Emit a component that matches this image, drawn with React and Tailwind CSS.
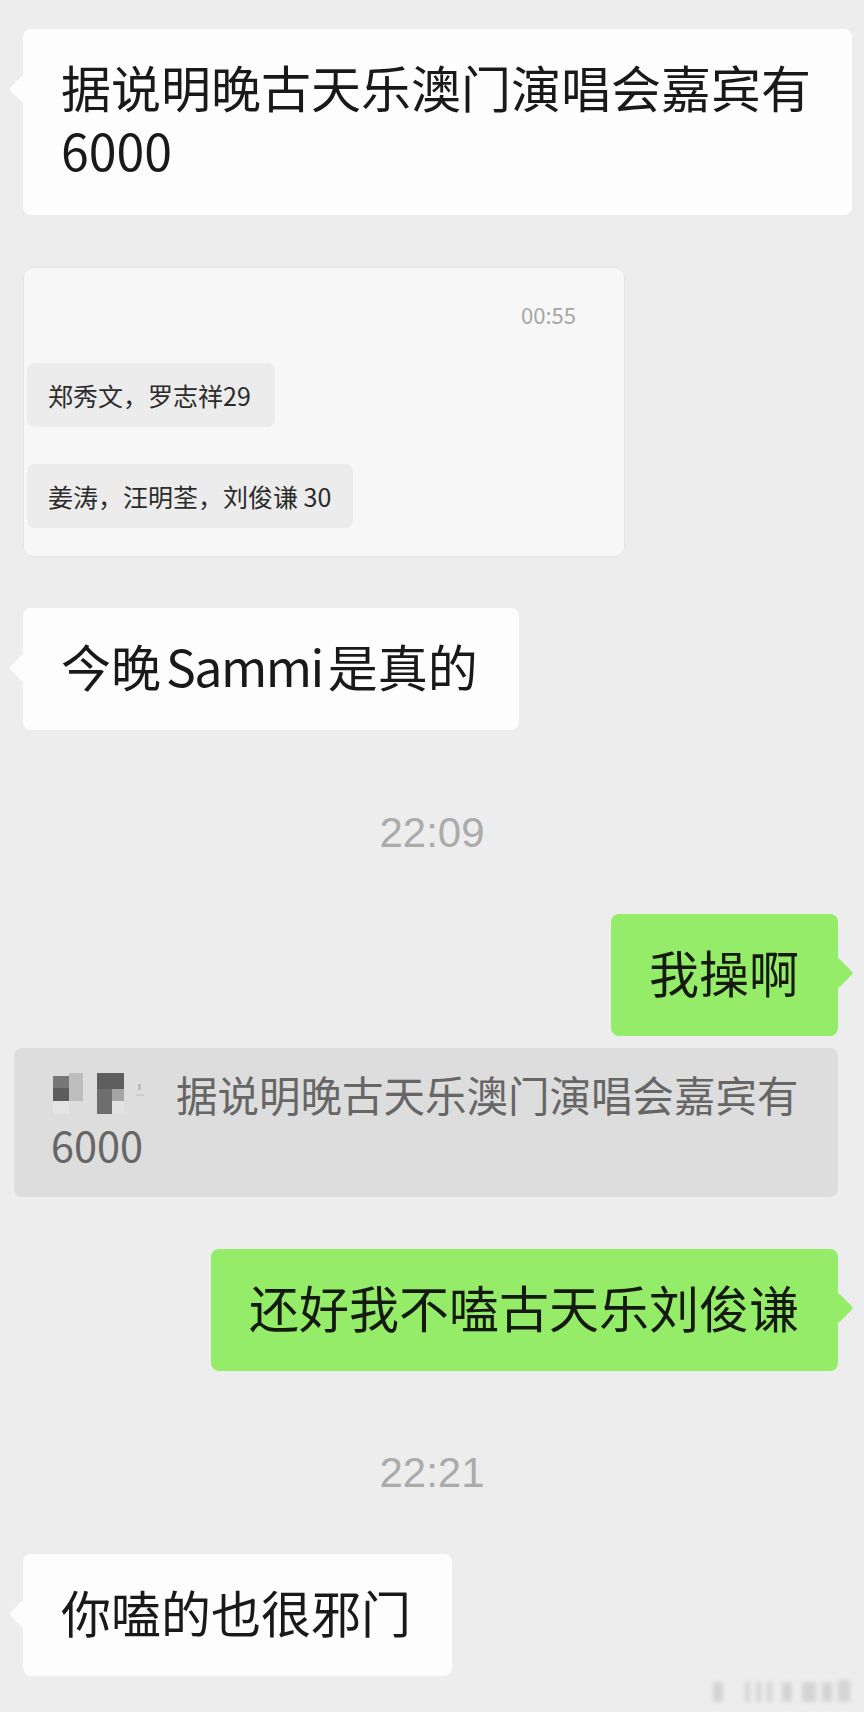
import React from "react";

function LeftBubble({ children, className = "" }) {
  return (
    <div className={`relative self-start ml-[23px] bg-[#fdfdfd] rounded-[8px] pl-[38px] pr-[41px] pt-[26px] pb-[34px] text-[50px] leading-[62px] text-[#191919] whitespace-nowrap ${className}`}>
      <div className="absolute left-[-10px] top-[50px] w-5 h-5 rotate-45 rounded-[3px] bg-[#fdfdfd]" />
      <span className="relative">{children}</span>
    </div>
  );
}

function RightBubble({ children, className = "" }) {
  return (
    <div className={`relative self-end mr-[26px] bg-[#95ec69] rounded-[8px] pl-[38px] pr-[39px] pt-[26px] pb-[34px] text-[50px] leading-[62px] text-[#141a10] whitespace-nowrap ${className}`}>
      <div className="absolute right-[-11px] top-[48px] w-[22px] h-[22px] rotate-45 rounded-[3px] bg-[#95ec69]" />
      <span className="relative">{children}</span>
    </div>
  );
}

function Time({ children, className = "" }) {
  return (
    <div className={`self-center h-[48px] leading-[48px] text-[42px] text-[#ababab] font-['Liberation_Sans',sans-serif] ${className}`}>
      {children}
    </div>
  );
}

// blurred avatar/name in the quote
function Mosaic() {
  return (
    <svg width="102" height="44" viewBox="0 0 102 44" className="ml-[1px] mr-[22px] shrink-0">
      <rect x="1" y="4" width="16" height="12" fill="#777" />
      <rect x="1" y="16" width="16" height="13" fill="#5c5c5c" />
      <rect x="17" y="1" width="14" height="28" fill="#bdbdbd" />
      <rect x="1" y="29" width="16" height="13" fill="#e4e4e4" />
      <rect x="45" y="1" width="27" height="16" fill="#5e5e5e" />
      <rect x="45" y="17" width="15" height="25" fill="#6e6e6e" />
      <rect x="60" y="17" width="12" height="12" fill="#a5a5a5" />
      <rect x="60" y="29" width="12" height="13" fill="#e2e2e2" />
      <rect x="86" y="12" width="3" height="6" fill="#bbb" />
      <rect x="84" y="22" width="8" height="2" fill="#ccc" />
    </svg>
  );
}

function Watermark() {
  return (
    <svg width="146" height="28" viewBox="0 0 146 28" className="absolute left-[710px] top-[1677px]">
      <defs>
        <filter id="wm" x="-10%" y="-30%" width="120%" height="160%">
          <feGaussianBlur stdDeviation="2" />
        </filter>
      </defs>
      <g filter="url(#wm)" fill="#d4d4d4">
        <rect x="3" y="5" width="10" height="20" />
        <rect x="35" y="5" width="5" height="20" />
        <rect x="46" y="5" width="5" height="20" />
        <rect x="57" y="5" width="5" height="20" />
        <rect x="72" y="5" width="10" height="20" />
        <rect x="92" y="5" width="14" height="20" />
        <rect x="112" y="5" width="10" height="20" />
        <rect x="128" y="3" width="12" height="22" />
      </g>
    </svg>
  );
}

export default function App() {
  return (
    <div className="relative w-[864px] min-h-[1712px] bg-[#ededed] flex flex-col pt-[29px] font-['Noto_Sans_CJK_SC','Noto_Sans',sans-serif]">
      <LeftBubble className="!leading-[63px]">
        据说明晚古天乐澳门演唱会嘉宾有
        <br />
        6000
      </LeftBubble>

      {/* forwarded chat record */}
      <div className="self-start ml-[23px] mt-[52px] w-[602px] bg-[#f7f7f7] border border-[#e3e3e3] rounded-[10px] pt-[35px] pb-[28px] pl-[3px] pr-[48px] flex flex-col items-start">
        <div className="self-end text-[22px] leading-[22px] text-[#a6a6a6]">00:55</div>
        <div className="mt-[38px] bg-[#ececec] rounded-[8px] pl-[21px] pr-[24px] py-[19px] text-[25px] leading-[26px] text-[#2b2b2b] whitespace-nowrap">
          郑秀文，罗志祥29
        </div>
        <div className="mt-[37px] bg-[#ececec] rounded-[8px] pl-[21px] pr-[22px] py-[19px] text-[25px] leading-[26px] text-[#2b2b2b] whitespace-nowrap">
          姜涛，汪明荃，刘俊谦 30
        </div>
      </div>

      <LeftBubble className="mt-[51px]">
        今晚<span className="ml-[5px] mr-[5px] tracking-[-1.5px]">Sammi</span>是真的
      </LeftBubble>

      <Time className="mt-[79px]">22:09</Time>

      <RightBubble className="mt-[57px]">我操啊</RightBubble>

      {/* quoted message */}
      <div className="self-start ml-[14px] mt-[12px] w-[824px] bg-[#dddddd] rounded-[8px] pl-[37px] pt-[21px] pb-[28px] text-[41.5px] leading-[50px] text-[#666]">
        <div className="flex items-center whitespace-nowrap">
          <Mosaic />
          <span>据说明晚古天乐澳门演唱会嘉宾有</span>
        </div>
        <div>6000</div>
      </div>

      <RightBubble className="mt-[52px]">还好我不嗑古天乐刘俊谦</RightBubble>

      <Time className="mt-[78px]">22:21</Time>

      <LeftBubble className="mt-[57px]">你嗑的也很邪门</LeftBubble>

      <Watermark />
    </div>
  );
}
